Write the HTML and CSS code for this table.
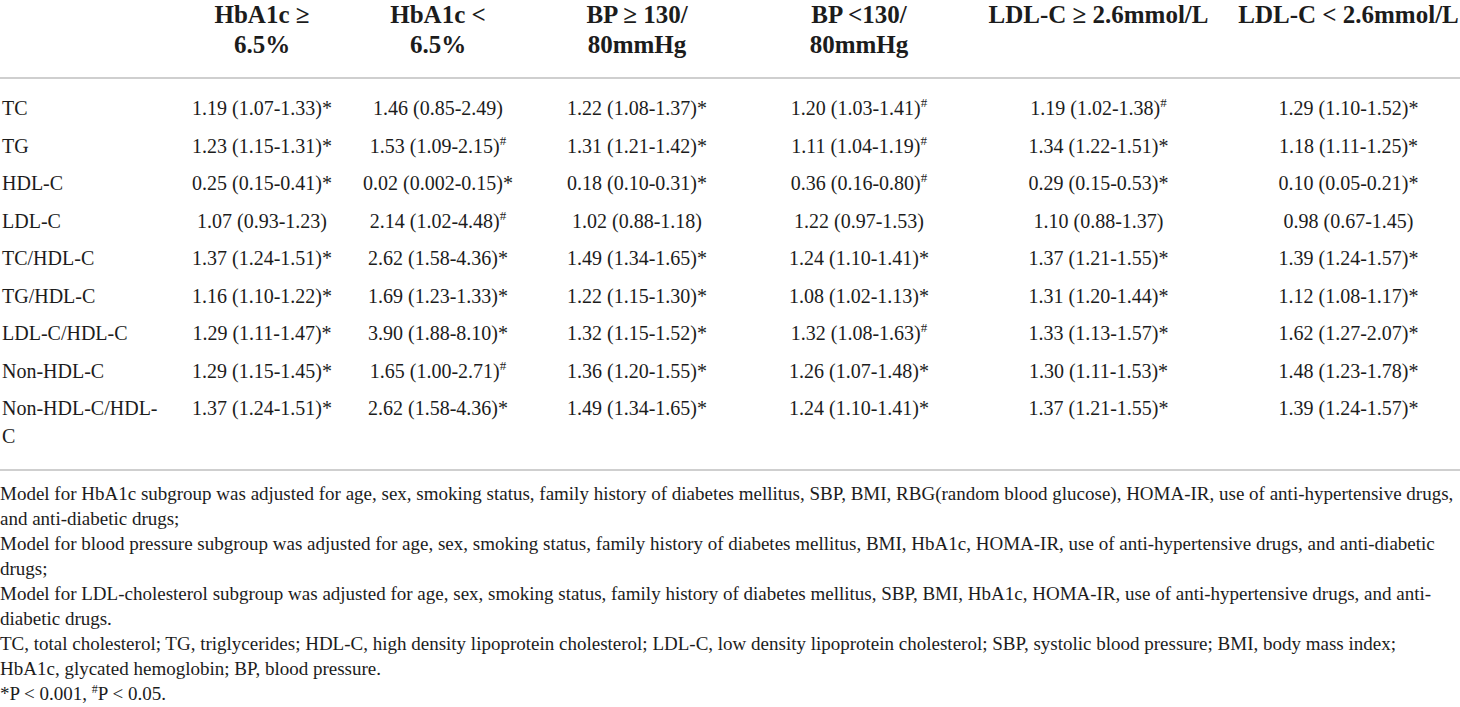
FILE: index.html
```html
<!DOCTYPE html>
<html lang="en">
<head>
    <meta charset="UTF-8">
    <title>Lipid ratios by subgroup</title>
    <link rel="stylesheet" href="styles.css">
</head>
<body>
    <div class="table-wrap">
        <table class="results">
            <colgroup>
                <col class="col-label">
                <col class="col-a">
                <col class="col-b">
                <col class="col-c">
                <col class="col-d">
                <col class="col-e">
                <col class="col-f">
            </colgroup>
            <thead>
                <tr>
                    <th></th>
                    <th>HbA1c ≥<br>6.5%</th>
                    <th>HbA1c &lt;<br>6.5%</th>
                    <th>BP ≥ 130/<br>80mmHg</th>
                    <th>BP &lt;130/<br>80mmHg</th>
                    <th class="nowrap">LDL-C ≥ 2.6mmol/L</th>
                    <th class="nowrap last">LDL-C &lt; 2.6mmol/L</th>
                </tr>
            </thead>
            <tbody>
                <tr class="first">
                    <td>TC</td>
                    <td>1.19 (1.07-1.33)*</td>
                    <td>1.46 (0.85-2.49)</td>
                    <td>1.22 (1.08-1.37)*</td>
                    <td>1.20 (1.03-1.41)<sup>#</sup></td>
                    <td>1.19 (1.02-1.38)<sup>#</sup></td>
                    <td class="last">1.29 (1.10-1.52)*</td>
                </tr>
                <tr>
                    <td>TG</td>
                    <td>1.23 (1.15-1.31)*</td>
                    <td>1.53 (1.09-2.15)<sup>#</sup></td>
                    <td>1.31 (1.21-1.42)*</td>
                    <td>1.11 (1.04-1.19)<sup>#</sup></td>
                    <td>1.34 (1.22-1.51)*</td>
                    <td class="last">1.18 (1.11-1.25)*</td>
                </tr>
                <tr>
                    <td>HDL-C</td>
                    <td>0.25 (0.15-0.41)*</td>
                    <td>0.02 (0.002-0.15)*</td>
                    <td>0.18 (0.10-0.31)*</td>
                    <td>0.36 (0.16-0.80)<sup>#</sup></td>
                    <td>0.29 (0.15-0.53)*</td>
                    <td class="last">0.10 (0.05-0.21)*</td>
                </tr>
                <tr>
                    <td>LDL-C</td>
                    <td>1.07 (0.93-1.23)</td>
                    <td>2.14 (1.02-4.48)<sup>#</sup></td>
                    <td>1.02 (0.88-1.18)</td>
                    <td>1.22 (0.97-1.53)</td>
                    <td>1.10 (0.88-1.37)</td>
                    <td class="last">0.98 (0.67-1.45)</td>
                </tr>
                <tr>
                    <td>TC/HDL-C</td>
                    <td>1.37 (1.24-1.51)*</td>
                    <td>2.62 (1.58-4.36)*</td>
                    <td>1.49 (1.34-1.65)*</td>
                    <td>1.24 (1.10-1.41)*</td>
                    <td>1.37 (1.21-1.55)*</td>
                    <td class="last">1.39 (1.24-1.57)*</td>
                </tr>
                <tr>
                    <td>TG/HDL-C</td>
                    <td>1.16 (1.10-1.22)*</td>
                    <td>1.69 (1.23-1.33)*</td>
                    <td>1.22 (1.15-1.30)*</td>
                    <td>1.08 (1.02-1.13)*</td>
                    <td>1.31 (1.20-1.44)*</td>
                    <td class="last">1.12 (1.08-1.17)*</td>
                </tr>
                <tr>
                    <td>LDL-C/HDL-C</td>
                    <td>1.29 (1.11-1.47)*</td>
                    <td>3.90 (1.88-8.10)*</td>
                    <td>1.32 (1.15-1.52)*</td>
                    <td>1.32 (1.08-1.63)<sup>#</sup></td>
                    <td>1.33 (1.13-1.57)*</td>
                    <td class="last">1.62 (1.27-2.07)*</td>
                </tr>
                <tr>
                    <td>Non-HDL-C</td>
                    <td>1.29 (1.15-1.45)*</td>
                    <td>1.65 (1.00-2.71)<sup>#</sup></td>
                    <td>1.36 (1.20-1.55)*</td>
                    <td>1.26 (1.07-1.48)*</td>
                    <td>1.30 (1.11-1.53)*</td>
                    <td class="last">1.48 (1.23-1.78)*</td>
                </tr>
                <tr>
                    <td>Non-HDL-C/HDL-C</td>
                    <td>1.37 (1.24-1.51)*</td>
                    <td>2.62 (1.58-4.36)*</td>
                    <td>1.49 (1.34-1.65)*</td>
                    <td>1.24 (1.10-1.41)*</td>
                    <td>1.37 (1.21-1.55)*</td>
                    <td class="last">1.39 (1.24-1.57)*</td>
                </tr>
            </tbody>
        </table>
    </div>

    <div class="notes">
        <p>Model for HbA1c subgroup was adjusted for age, sex, smoking status, family history of diabetes mellitus, SBP, BMI, RBG(random blood glucose), HOMA-IR, use of anti-hypertensive drugs, and anti-diabetic drugs;</p>
        <p>Model for blood pressure subgroup was adjusted for age, sex, smoking status, family history of diabetes mellitus, BMI, HbA1c, HOMA-IR, use of anti-hypertensive drugs, and anti-diabetic drugs;</p>
        <p>Model for LDL-cholesterol subgroup was adjusted for age, sex, smoking status, family history of diabetes mellitus, SBP, BMI, HbA1c, HOMA-IR, use of anti-hypertensive drugs, and anti-diabetic drugs.</p>
        <p>TC, total cholesterol; TG, triglycerides; HDL-C, high density lipoprotein cholesterol; LDL-C, low density lipoprotein cholesterol; SBP, systolic blood pressure; BMI, body mass index; HbA1c, glycated hemoglobin; BP, blood pressure.</p>
        <p>*P &lt; 0.001, <sup>#</sup>P &lt; 0.05.</p>
    </div>
</body>
</html>
```

FILE: styles.css
```css
body {
    margin: 0;
    background-color: #ffffff;
    color: #1c1c1c;
    font-family: "Liberation Serif", "Times New Roman", serif;
}
.table-wrap {
    border-bottom: 2px solid #cfcfcf;
    padding-bottom: 14px;
}
.results {
    width: 1460px;
    table-layout: fixed;
    border-collapse: collapse;
}
.col-label { width: 182px; }
.col-a { width: 160px; }
.col-b { width: 192px; }
.col-c { width: 206px; }
.col-d { width: 238px; }
.col-e { width: 241px; }
.col-f { width: 241px; }

.results th {
    font-size: 25px;
    font-weight: bold;
    line-height: 30px;
    text-align: center;
    vertical-align: top;
    padding: 0 4px 17px;
    border-bottom: 2px solid #cfcfcf;
}
.results th.nowrap {
    white-space: nowrap;
}
.results td {
    font-size: 20px;
    line-height: 27.5px;
    padding: 5px 4px;
    text-align: center;
    vertical-align: top;
}
.results td:first-child {
    text-align: left;
    padding: 5px 20px 5px 2px;
}
.results .last {
    padding-left: 18px;
    padding-right: 0;
}
.results tr.first td {
    padding-top: 16px;
}
.results sup {
    font-size: 13px;
    line-height: 0;
    vertical-align: 8px;
}

.notes {
    font-size: 19px;
    line-height: 25px;
    padding-top: 10px;
}
.notes p {
    margin: 0;
}
.notes sup {
    font-size: 12px;
    line-height: 0;
    vertical-align: 7px;
}
```
